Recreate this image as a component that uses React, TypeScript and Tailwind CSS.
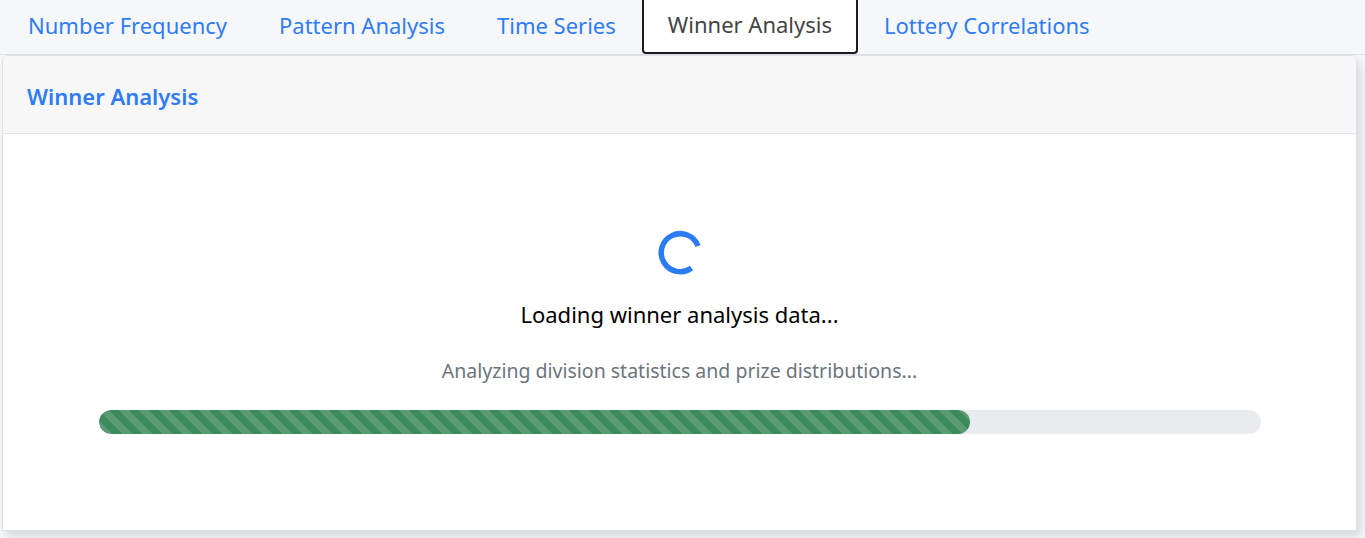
import React from "react";

const tabs = [
  "Number Frequency",
  "Pattern Analysis",
  "Time Series",
  "Winner Analysis",
  "Lottery Correlations",
];

function Spinner() {
  return (
    <svg width="48" height="48" viewBox="0 0 48 48">
      <path
        d="M 42 17 A 19 19 0 1 0 35.5 39"
        fill="none"
        stroke="#2b7bf3"
        strokeWidth="5.5"
      />
    </svg>
  );
}

export default function App() {
  const active = "Winner Analysis";

  return (
    <main
      className="h-[538px] overflow-hidden bg-[#f6f7f9] text-[#212529]"
      style={{ fontFamily: '"Noto Sans", "Open Sans", sans-serif' }}
    >
      <nav className="flex h-[55px] items-stretch border-b border-[#dee2e6] pl-[2px] pr-[8px]">
        {tabs.map((t) => (
          <button
            key={t}
            className={`flex items-center px-[24px] pb-[4px] text-[22px] ${
              t === active
                ? "rounded-b-[4px] border-2 border-t-0 border-[#1b1b1b] bg-white text-[#444]"
                : "border-2 border-transparent text-[#2f7cf6]"
            }`}
          >
            {t}
          </button>
        ))}
      </nav>

      <div className="pl-[2px] pr-[8px]">
        <section className="h-[476px] overflow-hidden rounded-t-[6px] border border-[#dfe2e6] bg-white shadow-[4px_6px_10px_rgba(0,0,0,0.12)]">
          <div className="flex h-[78px] items-center border-b border-[#e2e4e7] bg-[#f7f7f7] px-[24px] pt-[4px]">
            <h2 className="text-[22px] font-semibold text-[#2f7cf6]">Winner Analysis</h2>
          </div>

          <div className="flex flex-col items-center pt-[95px]">
            <Spinner />
            <p className="mt-[21px] text-[22px] text-black">Loading winner analysis data...</p>
            <p className="mt-[25px] text-[19.5px] text-[#6c757d]">
              Analyzing division statistics and prize distributions...
            </p>
            <div className="mt-[25px] h-[24px] w-[1162px] overflow-hidden rounded-full bg-[#e9ecef]">
              <div
                className="h-full rounded-full bg-[#3d8a5b] bg-[linear-gradient(45deg,rgba(255,255,255,0.15)_25%,transparent_25%,transparent_50%,rgba(255,255,255,0.15)_50%,rgba(255,255,255,0.15)_75%,transparent_75%,transparent)] bg-[length:20px_20px]"
                style={{ width: "75%" }}
              />
            </div>
          </div>
        </section>
      </div>
    </main>
  );
}
